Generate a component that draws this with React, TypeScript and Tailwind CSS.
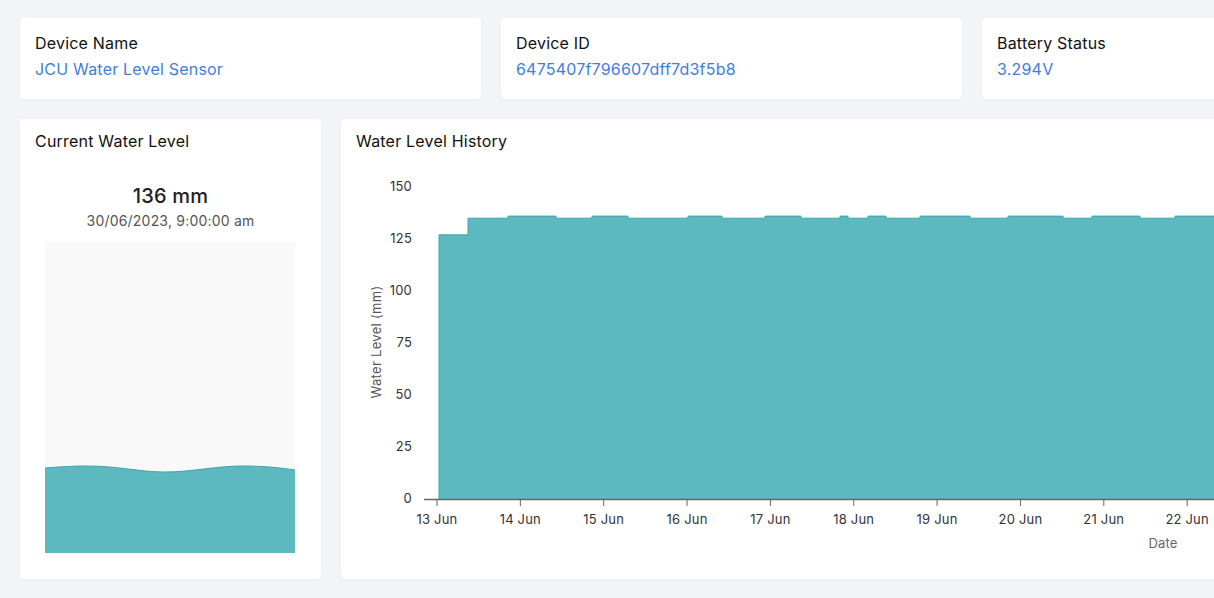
import React from 'react';

const FONT = "font-['Inter','Noto_Sans',sans-serif]";

// step data for the history chart: [page x, value]
const steps: [number, number][] = [
  [439, 127], [468, 135], [508, 136], [556, 135], [592, 136], [628, 135],
  [688, 136], [722, 135], [765, 136], [801, 135], [840, 136], [848, 135],
  [868, 136], [886, 135], [920, 136], [970, 135], [1008, 136], [1063, 135],
  [1092, 136], [1140, 135], [1175, 136], [1460, 136],
];

const X = (px: number) => px - 356;
const Y = (v: number) => 335 - v * 2.08;

const buildArea = () => {
  let d = `M${X(steps[0][0])},${Y(0)} L${X(steps[0][0])},${Y(steps[0][1])}`;
  for (let i = 1; i < steps.length; i++) {
    d += ` L${X(steps[i][0])},${Y(steps[i - 1][1])} L${X(steps[i][0])},${Y(steps[i][1])}`;
  }
  d += ` L${X(1460)},${Y(0)} Z`;
  return d;
};

const buildLine = () => {
  let d = `M${X(steps[0][0])},${Y(steps[0][1])}`;
  for (let i = 1; i < steps.length; i++) {
    d += ` L${X(steps[i][0])},${Y(steps[i - 1][1])} L${X(steps[i][0])},${Y(steps[i][1])}`;
  }
  return d;
};

const days = ['13 Jun', '14 Jun', '15 Jun', '16 Jun', '17 Jun', '18 Jun', '19 Jun', '20 Jun', '21 Jun', '22 Jun', '23 Jun'];
const yTicks = [0, 25, 50, 75, 100, 125, 150];

const InfoCard = ({ label, value }: { label: string; value: string }) => (
  <div className="bg-white rounded-[4px] shadow-[0_1px_3px_rgba(0,0,0,0.04)] h-[81px] px-[15px] pt-[13px] tracking-[0.2px]">
    <div className="text-[16px] leading-[24px] text-[#111]">{label}</div>
    <div className="text-[16px] leading-[24px] text-[#3f7ee0] mt-[2px]">{value}</div>
  </div>
);

const HistoryChart = () => (
  <svg width="1090" height="400" className="block" fontFamily="Inter, 'Noto Sans', sans-serif">
    <path d={buildArea()} fill="#5cb9c0" />
    <path d={buildLine()} fill="none" stroke="#3aa6ad" strokeWidth="1" />
    <line x1={X(439)} y1={Y(0)} x2={X(439)} y2={Y(127)} stroke="#3aa6ad" strokeWidth="1" />
    {/* axes */}
    <line x1={68} y1={335.5} x2={1090} y2={335.5} stroke="#666" strokeWidth="1.5" />
    {yTicks.map((t) => (
      <text key={t} x={56} y={Y(t) + 3.5} textAnchor="end" fontSize="13" fill="#333">
        {t}
      </text>
    ))}
    {days.map((d, i) => {
      const x = X(437) + i * 83.35;
      return (
        <g key={d}>
          <line x1={x} y1={335} x2={x} y2={342} stroke="#666" strokeWidth="1" />
          <text x={x} y={360} textAnchor="middle" fontSize="13" fill="#333">
            {d}
          </text>
        </g>
      );
    })}
    <text x={20} y={178} textAnchor="middle" fontSize="13" fill="#555" transform="rotate(-90 20 178)" dy="4.5" letterSpacing="0.3">
      Water Level (mm)
    </text>
    <text x={807} y={383.5} textAnchor="middle" fontSize="13" fill="#666">
      Date
    </text>
  </svg>
);

export default function App() {
  return (
    <div className={`w-screen h-screen overflow-hidden bg-[#f3f4f8] ${FONT}`}>
      <div className="w-[1423px] ml-[20px] pt-[18px] flex flex-col gap-[20px]">
        <div className="grid grid-cols-[461px_461px_461px] gap-[20px]">
          <InfoCard label="Device Name" value="JCU Water Level Sensor" />
          <InfoCard label="Device ID" value="6475407f796607dff7d3f5b8" />
          <InfoCard label="Battery Status" value="3.294V" />
        </div>
        <div className="flex gap-[20px]">
          <div className="w-[301px] h-[460px] bg-white rounded-[4px] shadow-[0_1px_3px_rgba(0,0,0,0.04)] pt-[10px] flex flex-col tracking-[0.2px]">
            <div className="px-[15px] text-[16px] leading-[24px] text-[#111]">Current Water Level</div>
            <div className="mt-[29px] text-center text-[20px] leading-[28px] text-[#222] font-medium">136 mm</div>
            <div className="text-center text-[14px] leading-[22px] text-[#555]">30/06/2023, 9:00:00 am</div>
            <div className="ml-[25px] mt-[10px] w-[250px] h-[311px] bg-[#f9f9fa]">
              <svg width="250" height="311" className="block">
                <path
                  d="M0,226 C18,224.6 30,224 43,224 C72,224 95,230 120,230 C148,230 170,224 198,224 C220,224 236,226 250,228 L250,311 L0,311 Z"
                  fill="#5cb9c0"
                />
                <path
                  d="M0,226 C18,224.6 30,224 43,224 C72,224 95,230 120,230 C148,230 170,224 198,224 C220,224 236,226 250,228"
                  fill="none"
                  stroke="#3aa6ad"
                  strokeWidth="1"
                />
              </svg>
            </div>
          </div>
          <div className="flex-1 h-[460px] bg-white rounded-[4px] shadow-[0_1px_3px_rgba(0,0,0,0.04)] pt-[10px] px-[15px] overflow-hidden tracking-[0.2px]">
            <div className="text-[16px] leading-[24px] text-[#111]">Water Level History</div>
            <div className="mt-[11px]">
              <HistoryChart />
            </div>
          </div>
        </div>
      </div>
    </div>
  );
}
